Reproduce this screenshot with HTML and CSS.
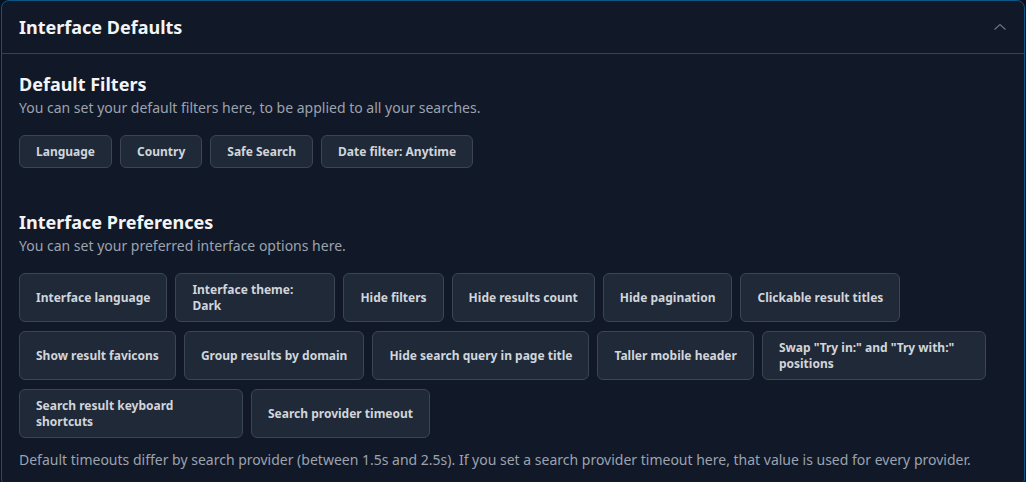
FILE: index.html
```html
<!DOCTYPE html>
<html lang="en">

<head>
	<meta charset="UTF-8">
	<meta name="viewport" content="width=device-width, initial-scale=1.0">
	<title>Interface Defaults</title>
	<link rel="stylesheet" href="styles.css">
</head>

<body>
	<section class="panel">
		<header class="panel-header">
			<h2>Interface Defaults</h2>
			<button class="collapse" aria-label="Collapse">
				<svg width="16" height="16" viewBox="0 0 16 16" fill="none" stroke="currentColor" stroke-width="1.2">
					<path d="M2.5 10.5 8 5.5l5.5 5" />
				</svg>
			</button>
		</header>

		<div class="panel-body">
			<div class="group">
				<h3>Default Filters</h3>
				<p class="hint">You can set your default filters here, to be applied to all your searches.</p>
				<div class="options">
					<button class="option">Language</button>
					<button class="option">Country</button>
					<button class="option">Safe Search</button>
					<button class="option">Date filter: Anytime</button>
				</div>
			</div>

			<div class="group">
				<h3>Interface Preferences</h3>
				<p class="hint">You can set your preferred interface options here.</p>
				<div class="options">
					<button class="option">Interface language</button>
					<button class="option option-narrow">Interface theme: Dark</button>
					<button class="option">Hide filters</button>
					<button class="option">Hide results count</button>
					<button class="option">Hide pagination</button>
					<button class="option">Clickable result titles</button>
					<button class="option">Show result favicons</button>
					<button class="option">Group results by domain</button>
					<button class="option">Hide search query in page title</button>
					<button class="option">Taller mobile header</button>
					<button class="option">Swap "Try in:" and "Try with:" positions</button>
					<button class="option">Search result keyboard shortcuts</button>
					<button class="option">Search provider timeout</button>
				</div>
				<p class="hint note">Default timeouts differ by search provider (between 1.5s and 2.5s). If you set a search provider timeout here, that value is used for every provider.</p>
			</div>
		</div>
	</section>
</body>

</html>
```

FILE: styles.css
```css
* {
	margin: 0;
	padding: 0;
	box-sizing: border-box;
	font-family: "Noto Sans", "Open Sans", sans-serif;
}

body {
	background-color: #0b1120;
	color: #f3f4f6;
	min-height: 100vh;
}

.panel {
	margin: 0 1px;
	background-color: #111827;
	border: 1px solid #0a5685;
	border-radius: 8px;
	overflow: hidden;
}

.panel-header {
	display: flex;
	justify-content: space-between;
	align-items: center;
	padding: 12px 16px 12px 17px;
	border-bottom: 1px solid #374151;
}

.panel-header h2 {
	font-size: 18px;
	line-height: 28px;
	font-weight: 700;
	color: #f3f4f6;
}

.collapse {
	display: flex;
	background: none;
	border: none;
	color: #6b7280;
	cursor: pointer;
}

.panel-body {
	padding: 16px 16px 16px 17px;
	display: flex;
	flex-direction: column;
	gap: 40px;
}

.group h3 {
	font-size: 18px;
	line-height: 28px;
	font-weight: 700;
	color: #f3f4f6;
}

.hint {
	font-size: 14px;
	line-height: 20px;
	color: #9ca3af;
}

.options {
	display: flex;
	flex-wrap: wrap;
	gap: 9px 8px;
	margin-top: 17px;
}

.option {
	max-width: 224px;
	padding: 7.5px 16px;
	font-size: 12px;
	line-height: 16px;
	font-weight: 700;
	text-align: left;
	color: #d1d5db;
	background-color: #1f2937;
	border: 1px solid #3b4655;
	border-radius: 6px;
	cursor: pointer;
}

.option:hover {
	background-color: #273244;
}

.option-narrow {
	max-width: 160px;
}

.note {
	margin-top: 12px;
}
```
